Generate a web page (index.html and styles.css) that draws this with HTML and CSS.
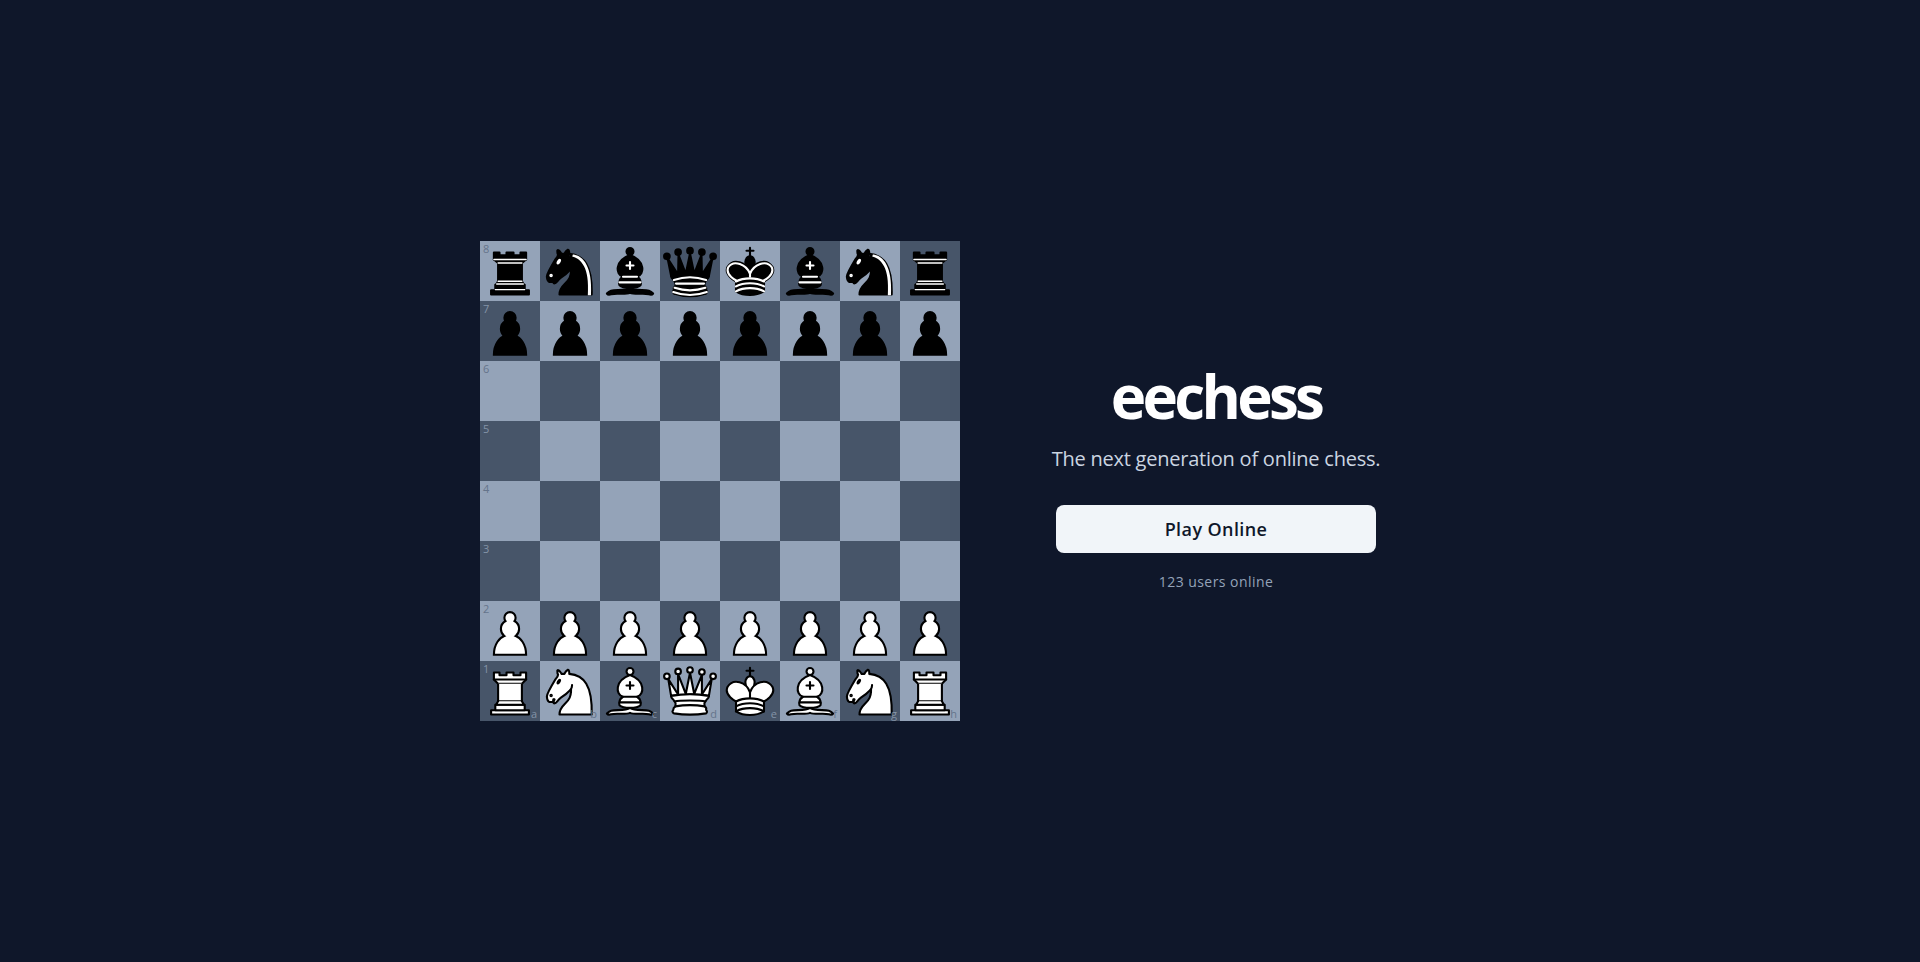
FILE: index.html
```html
<!DOCTYPE html>
<html lang="en">
<head>
<meta charset="utf-8">
<title>eechess</title>
<link rel="stylesheet" href="styles.css">
</head>
<body>
<svg class="defs" xmlns="http://www.w3.org/2000/svg" aria-hidden="true">
  <symbol id="wp" viewBox="0 0 45 45"><path d="m22.5 9c-2.21 0-4 1.79-4 4 0 .89.29 1.71.78 2.38C17.33 16.5 16 18.59 16 21c0 2.03.94 3.84 2.41 5.03C15.41 27.09 11 31.58 11 39.5H34C34 31.58 29.59 27.09 26.59 26.03 28.06 24.84 29 23.03 29 21 29 18.59 27.67 16.5 25.72 15.38 26.21 14.71 26.5 13.89 26.5 13c0-2.21-1.79-4-4-4z" fill="#fff" stroke="#000" stroke-width="1.5" stroke-linecap="round"/></symbol>
  <symbol id="bp" viewBox="0 0 45 45"><path d="m22.5 9c-2.21 0-4 1.79-4 4 0 .89.29 1.71.78 2.38C17.33 16.5 16 18.59 16 21c0 2.03.94 3.84 2.41 5.03C15.41 27.09 11 31.58 11 39.5H34C34 31.58 29.59 27.09 26.59 26.03 28.06 24.84 29 23.03 29 21 29 18.59 27.67 16.5 25.72 15.38 26.21 14.71 26.5 13.89 26.5 13c0-2.21-1.79-4-4-4z" fill="#000" stroke="#000" stroke-width="1.5" stroke-linecap="round"/></symbol>
  <symbol id="wr" viewBox="0 0 45 45"><g fill="#fff" fill-rule="evenodd" stroke="#000" stroke-width="1.5" stroke-linecap="round" stroke-linejoin="round" transform="translate(0 .3)"><path d="M9 39H36V36H9V39z" stroke-linecap="butt"/><path d="M12 36V32H33V36H12z" stroke-linecap="butt"/><path d="M11 14V9H15V11H20V9H25V11H30V9H34V14" stroke-linecap="butt"/><path d="M34 14L31 17H14L11 14"/><path d="M31 17V29.5H14V17" stroke-linecap="butt" stroke-linejoin="miter"/><path d="M31 29.5L32.5 32H12.5L14 29.5"/><path d="M11 14H34" fill="none" stroke-linejoin="miter"/></g></symbol>
  <symbol id="br" viewBox="0 0 45 45"><g fill="#000" fill-rule="evenodd" stroke="#000" stroke-width="1.5" stroke-linecap="round" stroke-linejoin="round" transform="translate(0 .3)"><path d="M9 39H36V36H9V39z" stroke-linecap="butt"/><path d="M12.5 32L14 29.5H31L32.5 32H12.5z" stroke-linecap="butt"/><path d="M12 36V32H33V36H12z" stroke-linecap="butt"/><path d="M14 29.5V16.5H31V29.5H14z" stroke-linecap="butt" stroke-linejoin="miter"/><path d="M14 16.5L11 14H34L31 16.5H14z" stroke-linecap="butt"/><path d="M11 14V9H15V11H20V9H25V11H30V9H34V14H11z" stroke-linecap="butt"/><path d="M12 35.5H33M13 31.5H32M14 29.5H31M14 16.5H31M11 14H34" fill="none" stroke="#fff" stroke-width="1" stroke-linejoin="miter"/></g></symbol>
  <symbol id="wn" viewBox="0 0 45 45"><g fill="#fff" fill-rule="evenodd" stroke="#000" stroke-width="1.5" stroke-linecap="round" stroke-linejoin="round" transform="translate(0 .3)"><path d="M22 10C32.5 11 38.5 18 38 39H15C15 30 25 32.5 23 18"/><path d="M24 18C24.38 20.91 18.45 25.37 16 27 13 29 13.18 31.34 11 31 9.958 30.06 12.41 27.96 11 28 10 28 11.19 29.23 10 30 9 30 5.997 31 6 26 6 24 12 14 12 14 12 14 13.89 12.1 14 10.5 13.27 9.506 13.5 8.5 13.5 7.5 14.5 6.5 16.5 10 16.5 10H18.5C18.5 10 19.28 8.008 21 7 22 7 22 10 22 10"/><path d="M9.5 25.5A.5.5 0 1 1 8.5 25.5 .5.5 0 1 1 9.5 25.5z" fill="#000"/><path d="M15 15.5A.5 1.5 0 1 1 14 15.5 .5 1.5 0 1 1 15 15.5z" transform="matrix(.866 .5 -.5 .866 9.693 -5.173)" fill="#000"/></g></symbol>
  <symbol id="bn" viewBox="0 0 45 45"><g fill="#000" fill-rule="evenodd" stroke="#000" stroke-width="1.5" stroke-linecap="round" stroke-linejoin="round" transform="translate(0 .3)"><path d="M22 10C32.5 11 38.5 18 38 39H15C15 30 25 32.5 23 18"/><path d="M24 18C24.38 20.91 18.45 25.37 16 27 13 29 13.18 31.34 11 31 9.958 30.06 12.41 27.96 11 28 10 28 11.19 29.23 10 30 9 30 5.997 31 6 26 6 24 12 14 12 14 12 14 13.89 12.1 14 10.5 13.27 9.506 13.5 8.5 13.5 7.5 14.5 6.5 16.5 10 16.5 10H18.5C18.5 10 19.28 8.008 21 7 22 7 22 10 22 10"/><path d="M9.5 25.5A.5.5 0 1 1 8.5 25.5 .5.5 0 1 1 9.5 25.5z" fill="#fff" stroke="#fff"/><path d="M15 15.5A.5 1.5 0 1 1 14 15.5 .5 1.5 0 1 1 15 15.5z" transform="matrix(.866 .5 -.5 .866 9.693 -5.173)" fill="#fff" stroke="#fff"/><path d="M24.55 10.4L24.1 11.85 24.6 12C27.75 13 30.25 14.49 32.5 18.75 34.75 23.01 35.75 29.06 35.25 39L35.2 39.5H37.45L37.5 39C38 28.94 36.62 22.15 34.25 17.66 31.88 13.17 28.46 11.02 25.06 10.5L24.55 10.4z" fill="#fff" stroke="none"/></g></symbol>
  <symbol id="wb" viewBox="0 0 45 45"><g fill="none" fill-rule="evenodd" stroke="#000" stroke-width="1.5" stroke-linecap="round" stroke-linejoin="round" transform="translate(0 .6)"><g fill="#fff" stroke-linecap="butt"><path d="M9 36C12.39 35.03 19.11 36.43 22.5 34 25.89 36.43 32.61 35.03 36 36 36 36 37.65 36.54 39 38 38.32 38.97 37.35 38.99 36 38.5 32.61 37.53 25.89 38.96 22.5 37.5 19.11 38.96 12.39 37.53 9 38.5 7.65 38.99 6.68 38.97 6 38 7.35 36.54 9 36 9 36z"/><path d="M15 32C17.5 34.5 27.5 34.5 30 32 30.5 30.5 30 30 30 30 30 27.5 27.5 26 27.5 26 33 24.5 33.5 14.5 22.5 10.5 11.5 14.5 12 24.5 17.5 26 17.5 26 15 27.5 15 30 15 30 14.5 30.5 15 32z"/><path d="M25 8A2.5 2.5 0 1 1 20 8 2.5 2.5 0 1 1 25 8z"/></g><path d="M17.5 26H27.5M15 30H30M22.5 15.5V20.5M20 18H25" stroke-linejoin="miter"/></g></symbol>
  <symbol id="bb" viewBox="0 0 45 45"><g fill="none" fill-rule="evenodd" stroke="#000" stroke-width="1.5" stroke-linecap="round" stroke-linejoin="round" transform="translate(0 .6)"><g fill="#000" stroke-linecap="butt"><path d="M9 36C12.39 35.03 19.11 36.43 22.5 34 25.89 36.43 32.61 35.03 36 36 36 36 37.65 36.54 39 38 38.32 38.97 37.35 38.99 36 38.5 32.61 37.53 25.89 38.96 22.5 37.5 19.11 38.96 12.39 37.53 9 38.5 7.65 38.99 6.68 38.97 6 38 7.35 36.54 9 36 9 36z"/><path d="M15 32C17.5 34.5 27.5 34.5 30 32 30.5 30.5 30 30 30 30 30 27.5 27.5 26 27.5 26 33 24.5 33.5 14.5 22.5 10.5 11.5 14.5 12 24.5 17.5 26 17.5 26 15 27.5 15 30 15 30 14.5 30.5 15 32z"/><path d="M25 8A2.5 2.5 0 1 1 20 8 2.5 2.5 0 1 1 25 8z"/></g><path d="M17.5 26H27.5M15 30H30M22.5 15.5V20.5M20 18H25" stroke="#fff" stroke-linejoin="miter"/></g></symbol>
  <symbol id="wq" viewBox="0 0 45 45"><g fill="#fff" fill-rule="evenodd" stroke="#000" stroke-width="1.5" stroke-linecap="round" stroke-linejoin="round"><path d="M8 12a2 2 0 1 1-4 0 2 2 0 1 1 4 0zm16.500-4.500a2 2 0 1 1-4 0 2 2 0 1 1 4 0zM41 12a2 2 0 1 1-4 0 2 2 0 1 1 4 0zM16 8.500a2 2 0 1 1-4 0 2 2 0 1 1 4 0zM33 9a2 2 0 1 1-4 0 2 2 0 1 1 4 0z"/><path stroke-linecap="butt" d="M9 26c8.500-1.500 21-1.500 27 0l2-12-7 11V11l-5.500 13.500-3-15-3 15-5.500-14V25L7 14l2 12z"/><path stroke-linecap="butt" d="M9 26c0 2 1.500 2 2.500 4 1 1.500 1 1 .5 3.500-1.500 1-1.500 2.500-1.500 2.500-1.500 1.500.5 2.500.5 2.500 6.500 1 16.500 1 23 0 0 0 1.500-1 0-2.500 0 0 .5-1.500-1-2.500-.5-2.500-.5-2 .5-3.500 1-2 2.500-2 2.500-4-8.500-1.500-18.500-1.500-27 0z"/><path fill="none" d="M11.500 30c3.500-1 18.500-1 22 0M12 33.500c6-1 15-1 21 0"/></g></symbol>
  <symbol id="bq" viewBox="0 0 45 45"><g fill="#000" fill-rule="evenodd" stroke="#000" stroke-width="1.5" stroke-linecap="round" stroke-linejoin="round"><path stroke-linecap="butt" d="M9 26C17.500 24.500 30 24.500 36 26L38.500 13.500 31 25 30.700 10.900 25.500 24.500 22.500 10 19.500 24.500 14.300 10.900 14 25 6.500 13.500 9 26z"/><path d="M9 26c0 2 1.500 2 2.500 4 1 1.500 1 1 .5 3.500-1.500 1-1 2.500-1 2.500-1.500 1.500 0 2.500 0 2.500 6.500 1 16.500 1 23 0 0 0 1.500-1 0-2.500 0 0 .5-1.500-1-2.500-.5-2.500-.5-2 .5-3.500 1-2 2.500-2 2.500-4-8.500-1.500-18.500-1.500-27 0z"/><path d="M11.500 30C15 29 30 29 33.500 30"/><path d="M12 33.500c6-1 15-1 21 0"/><circle cx="6" cy="12" r="2"/><circle cx="14" cy="9" r="2"/><circle cx="22.500" cy="8" r="2"/><circle cx="31" cy="9" r="2"/><circle cx="39" cy="12" r="2"/><path d="M11 38.500A35 35 1 0 0 34 38.500" fill="none" stroke-linecap="butt"/><g fill="none" stroke="#fff"><path d="M11 29A35 35 1 0 1 34 29"/><path d="M12.500 31.500H32.500"/><path d="M11.500 34.500A35 35 1 0 0 33.500 34.500"/><path d="M10.500 37.500A35 35 1 0 0 34.500 37.500"/></g></g></symbol>
  <symbol id="wk" viewBox="0 0 45 45"><g fill="none" fill-rule="evenodd" stroke="#000" stroke-width="1.5" stroke-linecap="round" stroke-linejoin="round"><path d="M22.500 11.630V6" stroke-linejoin="miter"/><path d="M20 8H25" stroke-linejoin="miter"/><path d="M22.500 25C22.500 25 27 17.500 25.500 14.500 25.500 14.500 24.500 12 22.500 12 20.500 12 19.500 14.500 19.500 14.500 18 17.500 22.500 25 22.500 25" fill="#fff" stroke-linecap="butt" stroke-linejoin="miter"/><path d="M12.500 37C18 40.500 27 40.500 32.500 37V30C32.500 30 41.500 25.500 38.500 19.500 34.500 13 25 16 22.500 23.500V27 23.500C20 16 10.500 13 6.500 19.500 3.500 25.500 12.500 30 12.500 30V37" fill="#fff"/><path d="M12.500 30C18 27 27 27 32.500 30M12.500 33.500C18 30.500 27 30.500 32.500 33.500M12.500 37C18 34 27 34 32.500 37"/></g></symbol>
  <symbol id="bk" viewBox="0 0 45 45"><g fill="none" fill-rule="evenodd" stroke="#000" stroke-width="1.5" stroke-linecap="round" stroke-linejoin="round"><path d="M22.500 11.630V6" stroke-linejoin="miter"/><path d="M22.500 25C22.500 25 27 17.500 25.500 14.500 25.500 14.500 24.500 12 22.500 12 20.500 12 19.500 14.500 19.500 14.500 18 17.500 22.500 25 22.500 25" fill="#000" stroke-linecap="butt" stroke-linejoin="miter"/><path d="M12.500 37C18 40.500 27 40.500 32.500 37V30C32.500 30 41.500 25.500 38.500 19.500 34.500 13 25 16 22.500 23.500V27 23.500C20 16 10.500 13 6.500 19.500 3.500 25.500 12.500 30 12.500 30V37" fill="#000"/><path d="M20 8H25" stroke-linejoin="miter"/><path d="M32 29.500C32 29.500 40.500 25.500 38.030 19.850 34.150 14 25 18 22.500 24.500V26.600 24.500C20 18 10.850 14 6.970 19.850 4.500 25.500 13 29.500 13 29.500" stroke="#fff"/><path d="M12.500 30C18 27 27 27 32.500 30M12.500 33.500C18 30.500 27 30.500 32.500 33.500M12.500 37C18 34 27 34 32.500 37" stroke="#fff"/></g></symbol>
</svg>
<main class="page">
  <section class="board" aria-label="Chess board">
    <div class="sq light"><span class="rank">8</span><svg class="piece"><use href="#br"/></svg></div>
    <div class="sq dark"><svg class="piece"><use href="#bn"/></svg></div>
    <div class="sq light"><svg class="piece"><use href="#bb"/></svg></div>
    <div class="sq dark"><svg class="piece"><use href="#bq"/></svg></div>
    <div class="sq light"><svg class="piece"><use href="#bk"/></svg></div>
    <div class="sq dark"><svg class="piece"><use href="#bb"/></svg></div>
    <div class="sq light"><svg class="piece"><use href="#bn"/></svg></div>
    <div class="sq dark"><svg class="piece"><use href="#br"/></svg></div>

    <div class="sq dark"><span class="rank">7</span><svg class="piece"><use href="#bp"/></svg></div>
    <div class="sq light"><svg class="piece"><use href="#bp"/></svg></div>
    <div class="sq dark"><svg class="piece"><use href="#bp"/></svg></div>
    <div class="sq light"><svg class="piece"><use href="#bp"/></svg></div>
    <div class="sq dark"><svg class="piece"><use href="#bp"/></svg></div>
    <div class="sq light"><svg class="piece"><use href="#bp"/></svg></div>
    <div class="sq dark"><svg class="piece"><use href="#bp"/></svg></div>
    <div class="sq light"><svg class="piece"><use href="#bp"/></svg></div>

    <div class="sq light"><span class="rank">6</span></div>
    <div class="sq dark"></div><div class="sq light"></div><div class="sq dark"></div>
    <div class="sq light"></div><div class="sq dark"></div><div class="sq light"></div><div class="sq dark"></div>

    <div class="sq dark"><span class="rank">5</span></div>
    <div class="sq light"></div><div class="sq dark"></div><div class="sq light"></div>
    <div class="sq dark"></div><div class="sq light"></div><div class="sq dark"></div><div class="sq light"></div>

    <div class="sq light"><span class="rank">4</span></div>
    <div class="sq dark"></div><div class="sq light"></div><div class="sq dark"></div>
    <div class="sq light"></div><div class="sq dark"></div><div class="sq light"></div><div class="sq dark"></div>

    <div class="sq dark"><span class="rank">3</span></div>
    <div class="sq light"></div><div class="sq dark"></div><div class="sq light"></div>
    <div class="sq dark"></div><div class="sq light"></div><div class="sq dark"></div><div class="sq light"></div>

    <div class="sq light"><span class="rank">2</span><svg class="piece"><use href="#wp"/></svg></div>
    <div class="sq dark"><svg class="piece"><use href="#wp"/></svg></div>
    <div class="sq light"><svg class="piece"><use href="#wp"/></svg></div>
    <div class="sq dark"><svg class="piece"><use href="#wp"/></svg></div>
    <div class="sq light"><svg class="piece"><use href="#wp"/></svg></div>
    <div class="sq dark"><svg class="piece"><use href="#wp"/></svg></div>
    <div class="sq light"><svg class="piece"><use href="#wp"/></svg></div>
    <div class="sq dark"><svg class="piece"><use href="#wp"/></svg></div>

    <div class="sq dark"><span class="rank">1</span><svg class="piece"><use href="#wr"/></svg><span class="file">a</span></div>
    <div class="sq light"><svg class="piece"><use href="#wn"/></svg><span class="file">b</span></div>
    <div class="sq dark"><svg class="piece"><use href="#wb"/></svg><span class="file">c</span></div>
    <div class="sq light"><svg class="piece"><use href="#wq"/></svg><span class="file">d</span></div>
    <div class="sq dark"><svg class="piece"><use href="#wk"/></svg><span class="file">e</span></div>
    <div class="sq light"><svg class="piece"><use href="#wb"/></svg><span class="file">f</span></div>
    <div class="sq dark"><svg class="piece"><use href="#wn"/></svg><span class="file">g</span></div>
    <div class="sq light"><svg class="piece"><use href="#wr"/></svg><span class="file">h</span></div>
  </section>
  <section class="intro">
    <h1 class="title">eechess</h1>
    <p class="tagline">The next generation of online chess.</p>
    <button class="play" type="button">Play Online</button>
    <p class="online">123 users online</p>
  </section>
</main>
</body>
</html>
```
FILE: styles.css
```css
* { box-sizing: border-box; }
html, body { height: 100%; margin: 0; }
body {
  background: #0f172a;
  font-family: "Open Sans", "Noto Sans", sans-serif;
  color: #f1f5f9;
}
.defs { position: absolute; width: 0; height: 0; overflow: hidden; }
.page {
  height: 100%;
  display: flex;
  align-items: center;
  justify-content: center;
  gap: 32px;
}
.board {
  display: grid;
  grid-template-columns: repeat(8, 60px);
  grid-template-rows: repeat(8, 60px);
  flex: none;
}
.sq { position: relative; }
.light { background: #94a3b8; }
.dark { background: #475569; }
.piece { display: block; width: 60px; height: 60px; transform: scale(1.05); }
.rank, .file {
  position: absolute;
  font-size: 11px;
  line-height: 12px;
  color: #64748b;
}
.dark .rank, .dark .file { color: #94a3b8; opacity: .8; }
.rank { top: 2px; left: 3px; }
.file { right: 3px; bottom: 1px; z-index: 1; }
.intro {
  width: 448px;
  display: flex;
  flex-direction: column;
  align-items: center;
}
.title {
  margin: 0;
  font-size: 60px;
  line-height: 54px;
  font-weight: 700;
  letter-spacing: -3.7px;
  color: #fff;
}
.tagline {
  margin: 22px 0 0;
  font-size: 20px;
  line-height: 28px;
  color: #cbd5e1;
  letter-spacing: -.23px;
}
.play {
  margin-top: 32px;
  width: 320px;
  height: 48px;
  border: 0;
  border-radius: 8px;
  background: #f1f5f9;
  color: #0f172a;
  font: 600 18px/28px "Open Sans", "Noto Sans", sans-serif;
  letter-spacing: .4px;
}
.online {
  margin: 19px 0 1px;
  font-size: 14px;
  line-height: 20px;
  color: #94a3b8;
  letter-spacing: .45px;
}
```
